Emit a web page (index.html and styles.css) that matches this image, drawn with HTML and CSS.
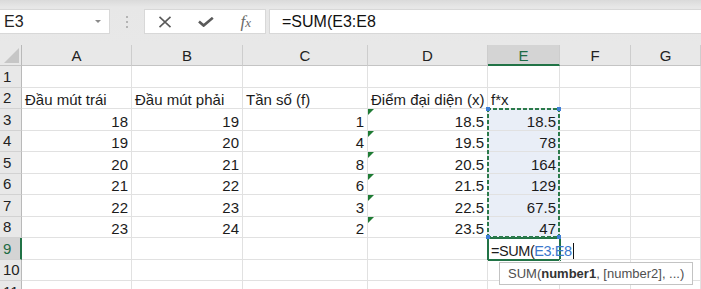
FILE: index.html
```html
<!DOCTYPE html>
<html lang="vi">
<head>
    <meta charset="UTF-8">
    <meta name="viewport" content="width=device-width, initial-scale=1.0">
    <title>Bảng tính</title>
    <link rel="stylesheet" href="styles.css">
</head>
<body>
    <header class="toolbar">
        <div class="namebox">
            <span>E3</span>
            <span class="drop"></span>
        </div>
        <div class="grip"><i></i><i></i><i></i></div>
        <div class="fx-buttons">
            <svg class="ico" width="14" height="12" viewBox="0 0 14 12">
                <path d="M1.5 0.8 L12.5 11.2 M12.5 0.8 L1.5 11.2" stroke="#5a5a5a" stroke-width="1.6" fill="none"/>
            </svg>
            <svg class="ico" width="16" height="10" viewBox="0 0 16 10">
                <path d="M1 4.6 L5.6 8.6 L14.8 0.8" stroke="#5a5a5a" stroke-width="2.6" fill="none"/>
            </svg>
            <span class="fx">f<small>x</small></span>
        </div>
        <div class="formula">=SUM(E3:E8</div>
    </header>

    <main class="sheet">
        <!-- cabecera de columnas -->
        <div class="corner"></div>
        <div class="ch">A</div>
        <div class="ch">B</div>
        <div class="ch">C</div>
        <div class="ch">D</div>
        <div class="ch on">E</div>
        <div class="ch">F</div>
        <div class="ch">G</div>

        <div class="rh">1</div>
        <div class="c"></div><div class="c"></div><div class="c"></div><div class="c"></div><div class="c"></div><div class="c"></div><div class="c"></div>

        <div class="rh">2</div>
        <div class="c">Đầu mút trái</div>
        <div class="c">Đầu mút phải</div>
        <div class="c">Tần số (f)</div>
        <div class="c">Điểm đại diện (x)</div>
        <div class="c">f*x</div>
        <div class="c"></div><div class="c"></div>

        <div class="rh">3</div>
        <div class="c n">18</div><div class="c n">19</div><div class="c n">1</div><div class="c n warn">18.5</div><div class="c n sel">18.5</div><div class="c"></div><div class="c"></div>

        <div class="rh">4</div>
        <div class="c n">19</div><div class="c n">20</div><div class="c n">4</div><div class="c n warn">19.5</div><div class="c n sel">78</div><div class="c"></div><div class="c"></div>

        <div class="rh">5</div>
        <div class="c n">20</div><div class="c n">21</div><div class="c n">8</div><div class="c n warn">20.5</div><div class="c n sel">164</div><div class="c"></div><div class="c"></div>

        <div class="rh">6</div>
        <div class="c n">21</div><div class="c n">22</div><div class="c n">6</div><div class="c n warn">21.5</div><div class="c n sel">129</div><div class="c"></div><div class="c"></div>

        <div class="rh">7</div>
        <div class="c n">22</div><div class="c n">23</div><div class="c n">3</div><div class="c n warn">22.5</div><div class="c n sel">67.5</div><div class="c"></div><div class="c"></div>

        <div class="rh">8</div>
        <div class="c n">23</div><div class="c n">24</div><div class="c n">2</div><div class="c n warn">23.5</div><div class="c n sel">47</div><div class="c"></div><div class="c"></div>

        <div class="rh on">9</div>
        <div class="c"></div><div class="c"></div><div class="c"></div><div class="c"></div>
        <div class="c active"><span class="edit">=SUM(<span class="ref">E3:E8</span></span></div>
        <div class="c"></div><div class="c"></div>

        <div class="rh">10</div>
        <div class="c"></div><div class="c"></div><div class="c"></div><div class="c"></div><div class="c"></div><div class="c"></div><div class="c"></div>

        <div class="rh">11</div>
        <div class="c"></div><div class="c"></div><div class="c"></div><div class="c"></div><div class="c"></div><div class="c"></div><div class="c"></div>

        <!-- rango referenciado E3:E8 -->
        <div class="range">
            <i class="h tl"></i><i class="h tr"></i><i class="h bl"></i><i class="h br"></i>
        </div>

        <div class="tip">SUM(<b>number1</b>, [number2], ...)</div>
    </main>
</body>
</html>
```

FILE: styles.css
```css
html{
    box-sizing: border-box;
    font-family: "Liberation Sans", Arial, sans-serif;
    font-size: 15px;
}
*,
*::before,
*::after{
    box-sizing: inherit;
}

body{
    margin: 0;
    width: 701px;
    height: 289px;
    overflow: hidden;
    background: #fff;
    color: #1b1b1b;
}

/* barra de formulas */
.toolbar{
    height: 45px;
    display: flex;
    align-items: flex-start;
    padding-top: 9px;
    background: linear-gradient(#dadada, #e7e7e7 7px, #e8e8e8);
}
.namebox{
    width: 110px;
    height: 25px;
    background: #fff;
    border: 1px solid #d8d8d8;
    border-left: 0;
    display: flex;
    align-items: center;
    justify-content: space-between;
    padding: 0 8px 0 4px;
    font-size: 16px;
    color: #222;
}
.drop{
    width: 0;
    height: 0;
    border-left: 3px solid transparent;
    border-right: 3px solid transparent;
    border-top: 3px solid #8a8a8a;
}
.grip{
    width: 34px;
    height: 25px;
    display: flex;
    flex-direction: column;
    align-items: center;
    justify-content: center;
    gap: 3px;
}
.grip i{
    width: 2px;
    height: 2px;
    background: #b4b4b4;
}
.fx-buttons{
    width: 122px;
    height: 25px;
    background: #fff;
    border: 1px solid #d8d8d8;
    display: flex;
    align-items: center;
    justify-content: space-between;
    padding: 0 14px 0 13px;
}
.fx{
    font-family: "Liberation Serif", serif;
    font-style: italic;
    font-size: 17px;
    color: #6a6a6a;
}
.fx small{
    font-size: 13px;
}
.formula{
    flex-grow: 1;
    height: 25px;
    margin-left: 3px;
    background: #fff;
    border: 1px solid #d8d8d8;
    border-right: 0;
    padding-left: 12px;
    font-size: 16px;
    line-height: 23px;
    color: #111;
}

/* hoja */
.sheet{
    position: relative;
    display: grid;
    grid-template-columns: 22px 110px 111px 125px 120px 72px 71px 70px;
    grid-template-rows: 21px repeat(11, 21.5px);
}
.corner{
    background: #e8e8e8;
    border-right: 1px solid #b9b9b9;
    border-bottom: 1px solid #c4c4c4;
    position: relative;
}
.corner::after{
    content: "";
    position: absolute;
    left: 4px;
    top: 3px;
    border-left: 15px solid transparent;
    border-bottom: 15px solid #c6c6c6;
}
.ch{
    background: #e8e8e8;
    border-right: 1px solid #cdcdcd;
    border-bottom: 1px solid #c4c4c4;
    text-align: center;
    line-height: 21px;
    color: #222;
}
.ch.on{
    background: #d4d4d4;
    color: #1d6b45;
    border-bottom: 2px solid #217346;
}
.rh{
    background: #e8e8e8;
    border-right: 1px solid #b9b9b9;
    border-bottom: 1px solid #d2d2d2;
    padding-left: 3px;
    display: flex;
    align-items: center;
    color: #222;
}
.rh.on{
    background: #d4d4d4;
    color: #1d6b45;
    border-right: 2px solid #217346;
}
.c{
    border-right: 1px solid #e1e1e1;
    border-bottom: 1px solid #e1e1e1;
    padding: 0 3px;
    display: flex;
    align-items: flex-end;
    line-height: 16px;
    white-space: nowrap;
    position: relative;
}
.n{
    justify-content: flex-end;
}
.sel{
    background: #e9eef7;
}
.warn::before{
    content: "";
    position: absolute;
    left: 0;
    top: 0;
    border-top: 6px solid #1e7b34;
    border-right: 6px solid transparent;
}
.active{
    outline: 2px solid #217346;
    outline-offset: -1px;
    padding-left: 3px;
}
.edit{
    position: relative;
    z-index: 1;
    flex-shrink: 0;
    font-size: 14.5px;
    letter-spacing: -0.45px;
    padding-right: 1px;
    border-right: 1px solid #111;
}
.ref{
    color: #3c78cc;
}

/* el rango queda encima de las celdas, sin entrar en el auto-placement */
.range{
    position: absolute;
    grid-column: 6 / 7;
    grid-row: 4 / 10;
    top: -1px;
    left: -1px;
    right: 0;
    bottom: 0;
    pointer-events: none;
    background:
        repeating-linear-gradient(90deg, #2b7a4b 0 4px, transparent 4px 6px) top left / 100% 2px no-repeat,
        repeating-linear-gradient(90deg, #2b7a4b 0 4px, transparent 4px 6px) bottom left / 100% 2px no-repeat,
        repeating-linear-gradient(#2b7a4b 0 4px, transparent 4px 6px) top left / 2px 100% no-repeat,
        repeating-linear-gradient(#2b7a4b 0 4px, transparent 4px 6px) top right / 2px 100% no-repeat;
}
.h{
    position: absolute;
    width: 4px;
    height: 4px;
    background: #3f7fd6;
}
.tl{ left: -1px; top: -1px; }
.tr{ right: -1px; top: -1px; }
.bl{ left: -1px; bottom: -1px; }
.br{ right: -1px; bottom: -1px; }

.tip{
    position: absolute;
    left: 499px;
    top: 217px;
    height: 23px;
    padding: 0 8px;
    background: #fff;
    border: 1px solid #c3c3c3;
    font-size: 13px;
    line-height: 21px;
    color: #505050;
    white-space: nowrap;
}
.tip b{
    color: #333;
}
```
